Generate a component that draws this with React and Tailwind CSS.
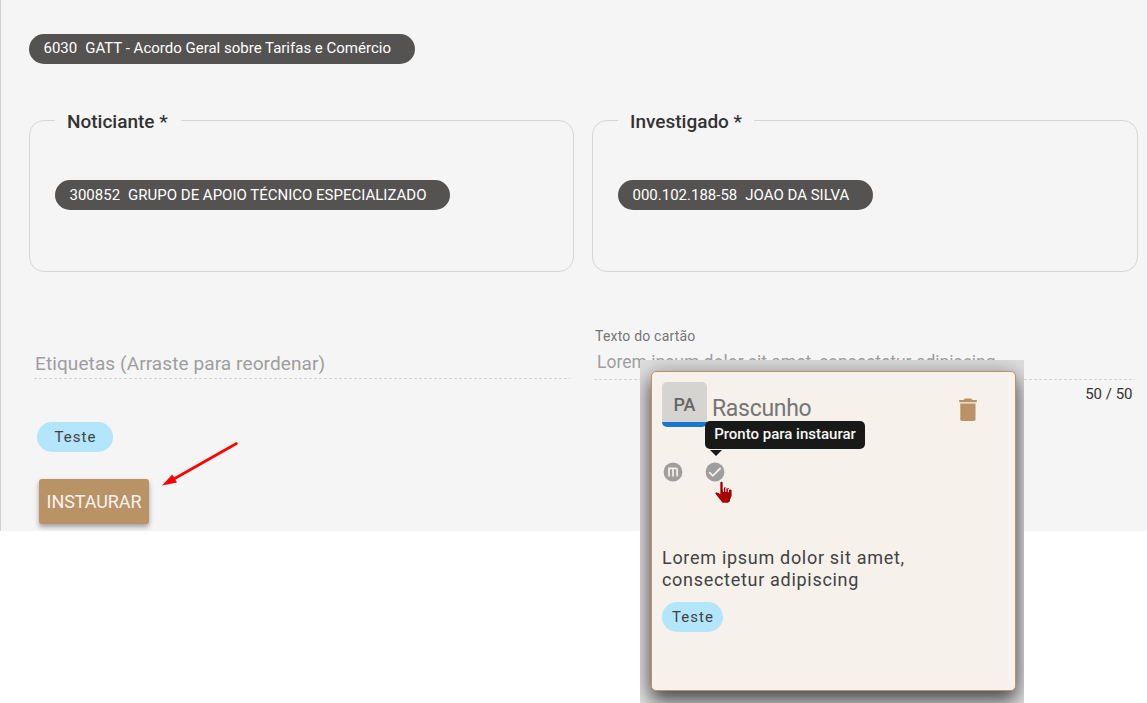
import React from "react";

function Pill({ code, label, className }) {
  return (
    <div className={`flex h-[30px] items-center whitespace-pre rounded-full bg-[#555351] pl-[14.5px] text-[15px] text-white ${className}`}>
      <span>{code}</span>
      <span className="ml-[8px]">{label}</span>
    </div>
  );
}

function Party({ title, className, legendClass, children }) {
  return (
    <fieldset className={`h-[165px] rounded-[15px] border border-[#d6d6d6] pl-[25px] ${className}`}>
      <legend className={`h-[27px] pl-3 text-[19px] font-medium leading-[29px] whitespace-nowrap text-[#333] ${legendClass}`}>{title}</legend>
      <div className="pt-[46px]">{children}</div>
    </fieldset>
  );
}

function Dashes({ className }) {
  return (
    <div className={`h-px bg-[repeating-linear-gradient(90deg,#d2d2d2_0_3px,transparent_3px_5px)] ${className}`} />
  );
}

function MinutaIcon() {
  return (
    <svg width="20" height="20" viewBox="0 0 20 20">
      <circle cx="10" cy="10" r="9.4" fill="#9e9e9e" />
      <path d="M6 14.4V6.3H13a1.1 1.1 0 0 1 1.1 1.1V14.4M10 6.3V14.4" fill="none" stroke="#f6f1eb" strokeWidth="1.7" />
    </svg>
  );
}

function CheckIcon() {
  return (
    <svg width="20" height="20" viewBox="0 0 20 20">
      <circle cx="10" cy="10" r="9.4" fill="#9e9e9e" />
      <path d="M4.2 10.2L7.8 13.8L15.6 6" fill="none" stroke="#f6f1eb" strokeWidth="1.8" />
    </svg>
  );
}

function TrashIcon() {
  return (
    <svg width="20" height="24" viewBox="0 0 20 24" fill="#b99266">
      <path d="M1.2 2H5.5L6.8.6H13.2L14.5 2H18.8V4.3H1.2Z" />
      <path d="M2.3 5.5H17.5V21.2a1.8 1.8 0 0 1-1.8 1.8H4.1a1.8 1.8 0 0 1-1.8-1.8Z" />
    </svg>
  );
}

function HandCursor() {
  return (
    <svg className="absolute left-[62px] top-[109px]" width="20" height="24" viewBox="0 0 20 24">
      <path
        d="M6.3 1.8C6.3.5 8.7.5 8.7 1.8V8.2L10.5 6.2L12.4 6.8L13 8.3L13.5 7L15 7.5L15.5 9L16.4 8.3L17.6 9.3V15L16 18.5V20.2L14 21.7H8.5L6.8 19.5L2 13.5L1.2 12L2.4 11.3L5 12.2L6.3 13.4Z"
        fill="#a90000" stroke="#fff" strokeWidth="1.2" paintOrder="stroke"
      />
      <path d="M9.4 6.5V10.8M11.9 7V11M14.4 8V11.3" stroke="#fff" strokeWidth="1" />
    </svg>
  );
}

function CardPreview() {
  return (
    <div className="absolute left-[640px] top-[360px] h-[343px] w-[384px] overflow-hidden bg-[#e2e2e2] pl-[11px] pt-[11px]">
      <div className="relative h-[320px] w-[365px] rounded-[5px] border border-[#b99266] bg-[#f6f1eb] px-[10px] pt-[10px] shadow-[0_10px_18px_0_rgba(0,0,0,0.6),0_0_28px_4px_rgba(0,0,0,0.2)]">
        <div className="flex h-[45px]">
          <div className="flex h-[45px] w-[45px] items-center justify-center rounded-[5px] border-b-[5px] border-[#1976d2] bg-[#d6d4d0] pt-[5px] text-[18px] font-medium text-[#666]">PA</div>
          <div className="ml-[5px] mt-[13px] text-[23px] leading-[28px] tracking-[-0.3px] text-[#757575]">Rascunho</div>
          <div className="ml-auto mr-[27.5px] mt-[16px]"><TrashIcon /></div>
        </div>
        <div className="mt-[35px] flex gap-[22px] pl-px">
          <MinutaIcon />
          <CheckIcon />
        </div>
        <p className="mt-[65px] whitespace-nowrap text-[18px] leading-[22px] tracking-[0.7px] text-[#424242]">
          Lorem ipsum dolor sit amet,<br />consectetur adipiscing
        </p>
        <div className="mt-[11px] flex h-[30px] w-[61px] items-center justify-center rounded-full bg-[#b3e5fc] pl-px text-[15px] tracking-[1px] text-[#424242]">Teste</div>
        <div className="absolute left-[53px] top-[49px] flex h-[28px] w-[160px] items-center justify-center rounded-[5px] bg-[#191917] pb-[2px] text-[15px] font-medium whitespace-nowrap text-[#f6f6f6]">
          Pronto para instaurar
        </div>
        <div className="absolute left-[58px] top-[78px] h-0 w-0 border-x-[6px] border-t-[6px] border-x-transparent border-t-[#191917]" />
        <HandCursor />
      </div>
    </div>
  );
}

export default function App() {
  return (
    <div className="relative h-[703px] w-[1147px] overflow-hidden bg-white font-['Roboto',sans-serif]">
      <main className="h-[531px] border-l border-[#cfcfcf] bg-[#f5f5f5] pl-[28px] pt-[34px]">
        <Pill code="6030" label="GATT - Acordo Geral sobre Tarifas e Comércio" className="w-[386px] pb-[2px]" />

        <section className="mt-[43px] flex gap-[18px]">
          <Party title="Noticiante *" className="w-[545px]" legendClass="w-[126px]">
            <Pill code="300852" label="GRUPO DE APOIO TÉCNICO ESPECIALIZADO" className="w-[395px]" />
          </Party>
          <Party title="Investigado *" className="w-[546px]" legendClass="w-[136px]">
            <Pill code="000.102.188-58" label="JOAO DA SILVA" className="w-[255px]" />
          </Party>
        </section>

        <section className="flex">
          <div className="w-[565px] pl-[5px] pt-[79px]">
            <div className="h-[27px] pl-px text-[19px] leading-[26px] tracking-[0.1px] whitespace-nowrap text-[#9e9e9e]">Etiquetas (Arraste para reordenar)</div>
            <Dashes className="w-[536px]" />
            <div className="ml-[3px] mt-[43px] flex h-[30px] w-[76px] items-center justify-center rounded-full bg-[#b3e5fc] pl-px text-[15px] tracking-[1px] text-[#424242]">Teste</div>
            <div className="mt-[27px] flex">
              <button className="ml-[5px] h-[45px] w-[110px] rounded-[3px] bg-[#b99266] text-[18px] tracking-[-0.1px] text-[#f8f3ed] shadow-[0_3px_5px_rgba(0,0,0,0.35)]">INSTAURAR</button>
            </div>
          </div>
          <div className="w-[541px] pt-[55px]">
            <div className="h-[18px] pl-px text-[14px] leading-[18px] tracking-[0.2px] text-[#757575]">Texto do cartão</div>
            <div className="h-[34px] pl-[3px] pt-[4px] text-[17.5px] leading-[26px] whitespace-nowrap text-[#9e9e9e]">Lorem ipsum dolor sit amet, consectetur adipiscing</div>
            <Dashes className="w-[541px]" />
            <div className="pr-[2.5px] pt-[4px] text-right text-[15px] leading-5 text-[#333]">50 / 50</div>
          </div>
        </section>
      </main>

      <svg className="absolute left-[160px] top-[440px]" width="82" height="50" viewBox="0 0 82 50">
        <path d="M76.5 3.5L13 39.5" stroke="#f00" strokeWidth="2.6" strokeLinecap="round" />
        <path d="M2 45.5L12.3 34.5L17 42.5Z" fill="#f00" />
      </svg>

      <CardPreview />
    </div>
  );
}
